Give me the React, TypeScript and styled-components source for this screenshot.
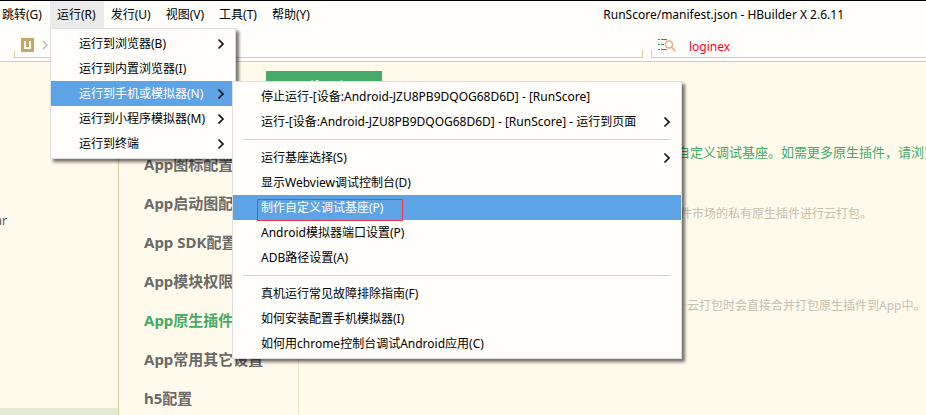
import React from 'react';
import styled, { createGlobalStyle, css } from 'styled-components';

const GlobalStyle = createGlobalStyle`
  * { box-sizing: border-box; }
  body {
    margin: 0;
    background: #fffaeb;
    color: #000;
    font: 12px/16px "Noto Sans", "Noto Sans CJK SC", sans-serif;
    overflow: hidden;
  }
  button, input { font: inherit; color: inherit; border: 0; background: none; padding: 0; margin: 0; border-radius: 0; }
  ul { list-style: none; margin: 0; padding: 0; }
`;

const Window = styled.div`
  display: flex;
  flex-direction: column;
  height: 100vh;
  white-space: nowrap;
`;

const MenuBar = styled.header`
  display: flex;
  align-items: stretch;
  height: 29px;
  flex: none;
  border-top: 1px solid #000;
  background: #fffefb;
`;

const MenuBarItem = styled.div<{ $flush?: boolean }>`
  position: relative;
  display: flex;
  width: ${(p) => (p.$flush ? '50px' : 'auto')};

  > button {
    padding: 0 8px 0 ${(p) => (p.$flush ? '2px' : '7px')};
  }
`;

const MenuBarButton = styled.button<{ $open?: boolean }>`
  background: ${(p) => (p.$open ? '#ebebeb' : 'transparent')};
`;

const WindowTitle = styled.div`
  margin-left: auto;
  padding-right: 82px;
  line-height: 27px;
`;

const popup = css`
  position: absolute;
  z-index: 2;
  padding: 2px 0;
  border: 1px solid #dedede;
  background: #fffefb;
  box-shadow: 3px 3px 3px rgba(0, 0, 0, 0.55);
`;

const Menu = styled.ul`
  ${popup}
  top: 27px;
  left: 0;
  width: 186px;
`;

const SubMenu = styled.ul`
  ${popup}
  top: 0;
  left: 181px;
  width: 450px;
`;

const MenuRow = styled.li`
  position: relative;
`;

const MenuButton = styled.button<{ $active?: boolean }>`
  display: flex;
  align-items: center;
  justify-content: space-between;
  width: 100%;
  height: 25px;
  padding: 0 10px 0 28px;
  color: ${(p) => (p.$active ? '#fff' : '#000')};
  background: ${(p) => (p.$active ? '#5fa3e7' : 'transparent')};
`;

const Separator = styled.li`
  height: 1px;
  margin: 5px 10px;
  background: #cfcfcf;
`;

const Highlight = styled.span`
  position: absolute;
  top: 4px;
  left: 24px;
  width: 146px;
  height: 22px;
  border: 1px solid #f0344a;
`;

const ToolBar = styled.div`
  display: flex;
  align-items: flex-end;
  gap: 8px;
  height: 33px;
  flex: none;
  padding: 0 0 3px 14px;
  border-bottom: 1px solid #d8cda0;
  background: #fffefb;
`;

const Field = styled.div<{ $search?: boolean }>`
  flex: ${(p) => (p.$search ? '0 0 275px' : '1')};
  display: flex;
  align-items: center;
  gap: 8px;
  height: 29px;
  padding: 4px 6px 0;
  border: 1px solid #d8cda0;
  border-top: 0;
  ${(p) => p.$search && 'border-right: 0;'}
  border-image: linear-gradient(to bottom, transparent 21px, #d8cda0 21px) 1;
`;

const SearchInput = styled.input`
  flex: 1;
  min-width: 0;
  height: 18px;
  padding-top: 2px;
  margin-left: 5px;
  color: #ff0028;
  outline: none;
`;

const Body = styled.div`
  display: flex;
  flex: 1;
  min-height: 0;
`;

const Explorer = styled.aside`
  display: flex;
  flex-direction: column;
  justify-content: space-between;
  width: 119px;
  padding-top: 151px;
  border-right: 1px solid #d8cda0;
`;

const FileName = styled.div`
  display: flex;
  justify-content: flex-end;
  width: 7px;
  overflow: hidden;
  color: #555;
`;

const SelectedFile = styled.div`
  height: 7px;
  background: #e2edd3;
`;

const Editor = styled.main`
  display: flex;
  flex-direction: column;
  flex: 1;
  min-width: 0;
`;

const TabRow = styled.div`
  height: 44px;
  flex: none;
  padding: 9px 0 0 147px;
`;

const Tab = styled.button`
  display: block;
  width: 116px;
  height: 28px;
  color: #fff;
  background: #46aa69;
  font-size: 13px;
`;

const Columns = styled.div`
  display: flex;
  flex: 1;
  min-height: 0;
`;

const Sections = styled.nav`
  display: flex;
  flex-direction: column;
  width: 180px;
  flex: none;
  padding: 39px 0 0 25px;
  border-right: 1px solid #f1e8cc;
`;

const SectionLink = styled.a<{ $active?: boolean }>`
  height: 39px;
  flex: none;
  color: ${(p) => (p.$active ? '#44aa66' : '#6b6a66')};
  font-size: 15px;
  font-weight: 700;
  line-height: 39px;
  text-decoration: none;
`;

const Content = styled.section`
  flex: 1;
  min-width: 0;
  padding: 36px 0 0 378px;
  overflow: hidden;
`;

const Notice = styled.p`
  margin: 0;
  color: #44aa66;
  font-size: 13px;
  line-height: 20px;
`;

const Hint = styled.p<{ $inset?: boolean }>`
  margin: ${(p) => (p.$inset ? '72px 0 0 10px' : '42px 0 0 3px')};
  color: #c6c0b0;
  line-height: 20px;
`;

const Chevron = () => (
  <svg width="8" height="12" viewBox="0 0 8 12" fill="none" stroke="#111" strokeWidth="1.7">
    <path d="M1.5 1.5 6 6 1.5 10.5" />
  </svg>
);

const ProjectIcon = () => (
  <svg width="13" height="14" viewBox="0 0 13 14">
    <path d="M0 0h13v14H0z" fill="#c3a668" />
    <path d="M4 3v7h5V3" fill="none" stroke="#fffaf0" strokeWidth="2" />
  </svg>
);

const Crumb = () => (
  <svg width="6" height="10" viewBox="0 0 6 10" fill="none" stroke="#b5b5b5" strokeWidth="1.3">
    <path d="M1 1l4 4-4 4" />
  </svg>
);

const SearchIcon = () => (
  <svg width="18" height="14" viewBox="0 0 18 14" fill="none">
    <path d="M0 1.5h2M3 1.5h6M0 6.5h2M3 6.5h3M0 11.5h2M3 11.5h6" stroke="#2c9a5b" />
    <circle cx="11" cy="6.5" r="3.5" stroke="#f2a778" strokeWidth="1.4" />
    <path d="M13.5 9l3.5 4" stroke="#f2a778" strokeWidth="1.5" />
  </svg>
);

type Entry = { label: string; more?: boolean; active?: boolean; boxed?: boolean };

const deviceGroups: Entry[][] = [
  [
    { label: '停止运行-[设备:Android-JZU8PB9DQOG68D6D] - [RunScore]' },
    { label: '运行-[设备:Android-JZU8PB9DQOG68D6D] - [RunScore] - 运行到页面', more: true },
  ],
  [
    { label: '运行基座选择(S)', more: true },
    { label: '显示Webview调试控制台(D)' },
    { label: '制作自定义调试基座(P)', active: true, boxed: true },
    { label: 'Android模拟器端口设置(P)' },
    { label: 'ADB路径设置(A)' },
  ],
  [
    { label: '真机运行常见故障排除指南(F)' },
    { label: '如何安装配置手机模拟器(I)' },
    { label: '如何用chrome控制台调试Android应用(C)' },
  ],
];

const runEntries: Entry[] = [
  { label: '运行到浏览器(B)', more: true },
  { label: '运行到内置浏览器(I)' },
  { label: '运行到手机或模拟器(N)', more: true, active: true },
  { label: '运行到小程序模拟器(M)', more: true },
  { label: '运行到终端', more: true },
];

const sections = ['App图标配置', 'App启动图配置', 'App SDK配置', 'App模块权限配置', 'App原生插件配置', 'App常用其它设置', 'h5配置'];

function Item({ entry, children }: { entry: Entry; children?: React.ReactNode }) {
  return (
    <MenuRow>
      <MenuButton type="button" $active={entry.active}>
        <span>{entry.label}</span>
        {entry.more && <Chevron />}
      </MenuButton>
      {entry.boxed && <Highlight />}
      {children}
    </MenuRow>
  );
}

function DeviceMenu() {
  return (
    <SubMenu>
      {deviceGroups.map((group, i) => (
        <React.Fragment key={i}>
          {i > 0 && <Separator />}
          {group.map((entry) => <Item key={entry.label} entry={entry} />)}
        </React.Fragment>
      ))}
    </SubMenu>
  );
}

export default function App() {
  return (
    <Window>
      <GlobalStyle />
      <MenuBar>
        <MenuBarItem $flush><MenuBarButton type="button">跳转(G)</MenuBarButton></MenuBarItem>
        <MenuBarItem>
          <MenuBarButton type="button" $open>运行(R)</MenuBarButton>
          <Menu>
            {runEntries.map((entry) => (
              <Item key={entry.label} entry={entry}>{entry.active && <DeviceMenu />}</Item>
            ))}
          </Menu>
        </MenuBarItem>
        {['发行(U)', '视图(V)', '工具(T)', '帮助(Y)'].map((label) => (
          <MenuBarItem key={label}><MenuBarButton type="button">{label}</MenuBarButton></MenuBarItem>
        ))}
        <WindowTitle>RunScore/manifest.json - HBuilder X 2.6.11</WindowTitle>
      </MenuBar>
      <ToolBar>
        <Field><ProjectIcon /><Crumb /></Field>
        <Field $search>
          <SearchIcon />
          <SearchInput aria-label="搜索" defaultValue="loginex" />
        </Field>
      </ToolBar>
      <Body>
        <Explorer>
          <FileName>ar</FileName>
          <SelectedFile />
        </Explorer>
        <Editor>
          <TabRow><Tab type="button">manifest.json</Tab></TabRow>
          <Columns>
            <Sections>
              {sections.map((name) => (
                <SectionLink key={name} href="#" $active={name.startsWith('App原生插件')}>{name}</SectionLink>
              ))}
            </Sections>
            <Content>
              <Notice>自定义调试基座。如需更多原生插件，请浏览</Notice>
              <Hint>件市场的私有原生插件进行云打包。</Hint>
              <Hint $inset>云打包时会直接合并打包原生插件到App中。</Hint>
            </Content>
          </Columns>
        </Editor>
      </Body>
    </Window>
  );
}
